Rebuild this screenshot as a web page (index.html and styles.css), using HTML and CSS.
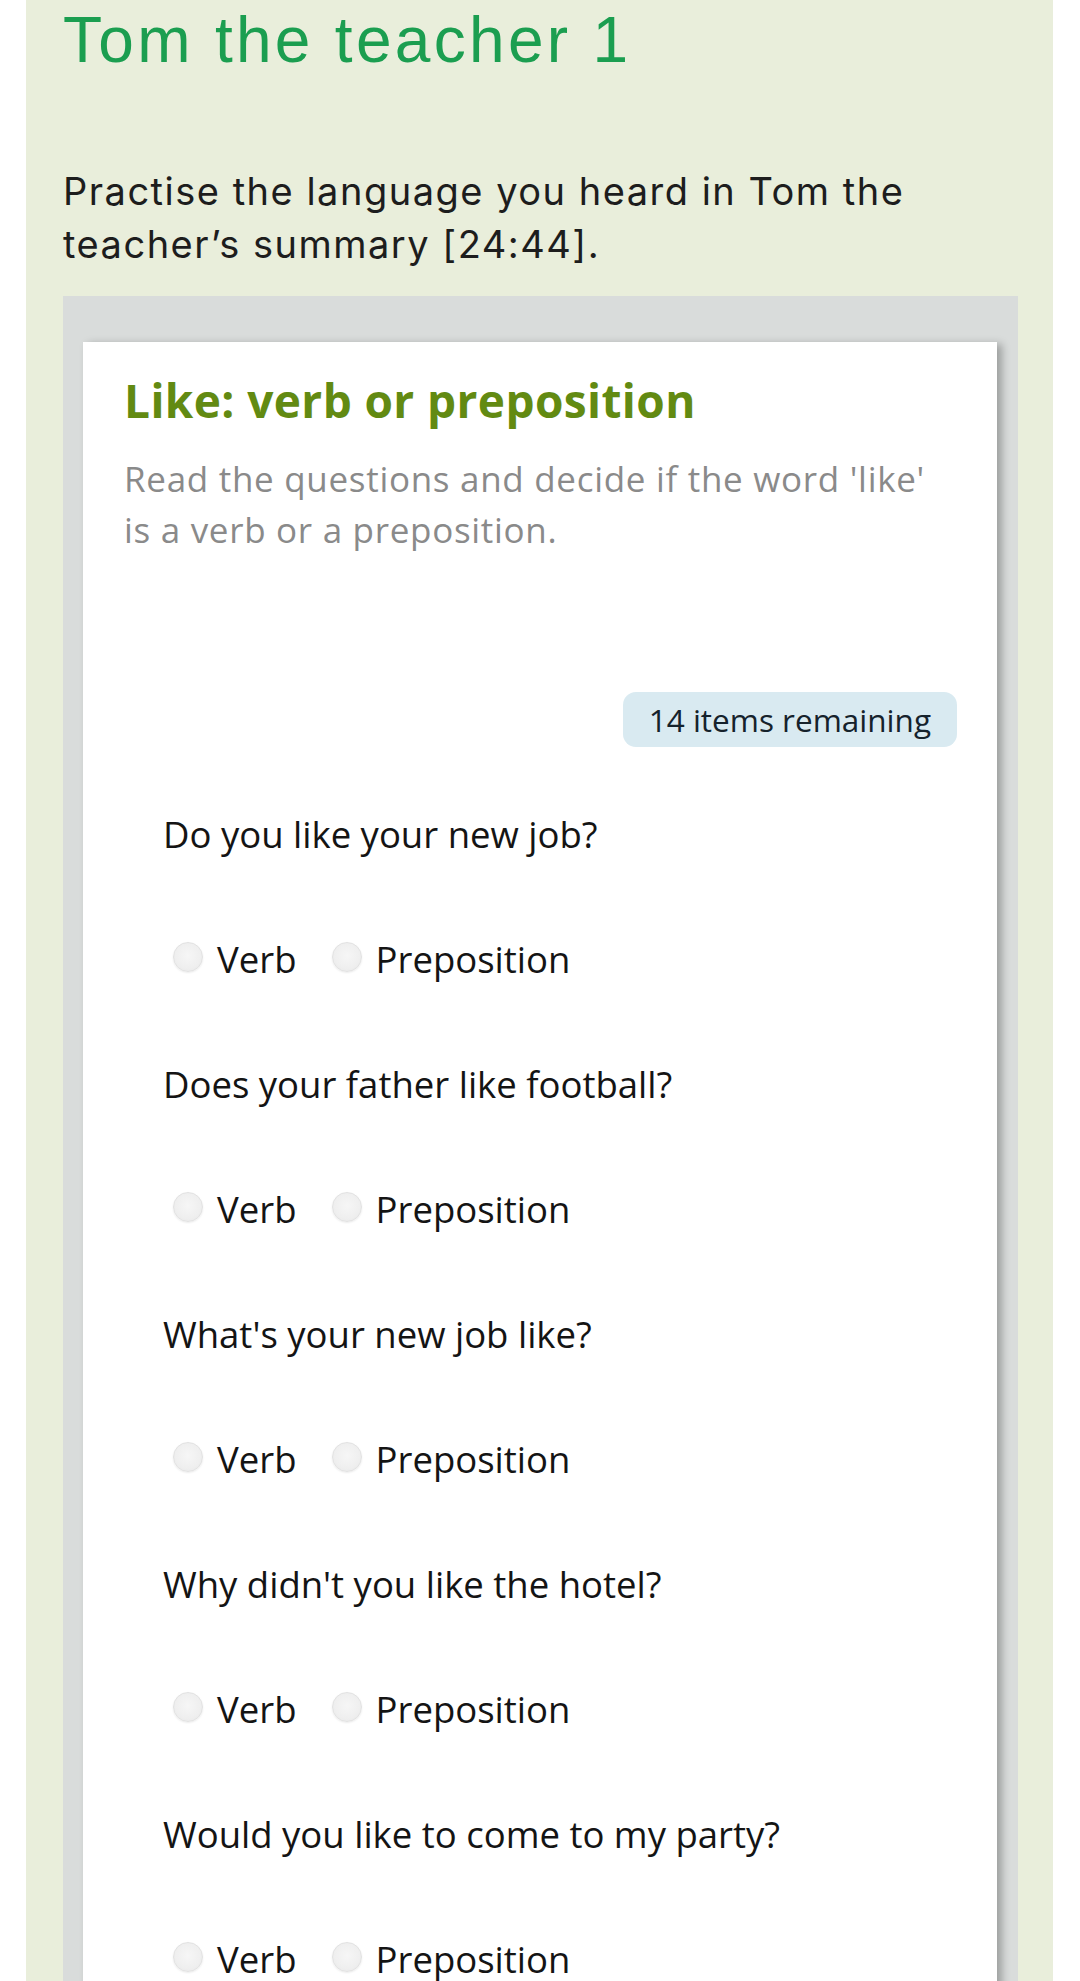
FILE: index.html
```html
<!DOCTYPE html>
<html lang="en">
<head>
<meta charset="utf-8">
<title>Tom the teacher 1</title>
<link rel="stylesheet" href="styles.css">
</head>
<body>
<div class="panel">
  <h1 class="title">Tom the teacher 1</h1>
  <p class="intro">Practise the language you heard in Tom the teacher’s summary [24:44].</p>
  <div class="frame">
    <div class="card">
      <h2 class="card-title">Like: verb or preposition</h2>
      <p class="card-desc">Read the questions and decide if the word 'like' is a verb or a preposition.</p>
      <div class="badge-row"><span class="badge">14 items remaining</span></div>
      <div class="items">
        <div class="item">
          <p class="question">Do you like your new job?</p>
          <div class="options">
            <label class="option"><input type="radio" name="q1" class="radio"><span>Verb</span></label>
            <label class="option"><input type="radio" name="q1" class="radio"><span>Preposition</span></label>
          </div>
        </div>
        <div class="item">
          <p class="question">Does your father like football?</p>
          <div class="options">
            <label class="option"><input type="radio" name="q2" class="radio"><span>Verb</span></label>
            <label class="option"><input type="radio" name="q2" class="radio"><span>Preposition</span></label>
          </div>
        </div>
        <div class="item">
          <p class="question">What's your new job like?</p>
          <div class="options">
            <label class="option"><input type="radio" name="q3" class="radio"><span>Verb</span></label>
            <label class="option"><input type="radio" name="q3" class="radio"><span>Preposition</span></label>
          </div>
        </div>
        <div class="item">
          <p class="question">Why didn't you like the hotel?</p>
          <div class="options">
            <label class="option"><input type="radio" name="q4" class="radio"><span>Verb</span></label>
            <label class="option"><input type="radio" name="q4" class="radio"><span>Preposition</span></label>
          </div>
        </div>
        <div class="item">
          <p class="question">Would you like to come to my party?</p>
          <div class="options">
            <label class="option"><input type="radio" name="q5" class="radio"><span>Verb</span></label>
            <label class="option"><input type="radio" name="q5" class="radio"><span>Preposition</span></label>
          </div>
        </div>
      </div>
    </div>
  </div>
</div>
</body>
</html>
```
FILE: styles.css
```css
html, body {
  margin: 0;
  padding: 0;
  background: #ffffff;
}

body {
  height: 1981px;
  overflow: hidden;
}

.panel {
  margin: 0 27px 0 26px;
  padding: 0 35px 0 37px;
  background: #e9eedb;
  min-height: 1981px;
  box-sizing: border-box;
}

.title {
  margin: 0;
  font-family: "Liberation Sans", Arial, sans-serif;
  font-weight: 400;
  font-size: 64px;
  line-height: 80px;
  letter-spacing: 3.3px;
  color: #1b9e50;
}

.intro {
  margin: 85px 0 0 0;
  font-family: Inter, "Liberation Sans", sans-serif;
  font-size: 38px;
  line-height: 53px;
  letter-spacing: 1.5px;
  color: #1d1d1d;
}

.frame {
  margin-top: 25px;
  padding: 46px 21px 0 20px;
  background: #d9dcdb;
  min-height: 1700px;
}

.card {
  background: #ffffff;
  padding: 30px 40px 0 41px;
  box-shadow: 5px 2px 8px rgba(0, 0, 0, 0.28);
  min-height: 1700px;
  font-family: "Open Sans", sans-serif;
}

.card-title {
  margin: 0;
  font-size: 46px;
  font-weight: 700;
  line-height: 56px;
  letter-spacing: 0.4px;
  color: #628a12;
}

.card-desc {
  margin: 25px 0 0 0;
  font-size: 35px;
  line-height: 51px;
  letter-spacing: 0.7px;
  color: #8a8a8a;
}

.badge-row {
  display: flex;
  justify-content: flex-end;
  margin-top: 137px;
}

.badge {
  display: inline-block;
  height: 55px;
  padding: 0 26px;
  border-radius: 13px;
  background: #d9eaf1;
  font-size: 31.5px;
  line-height: 55px;
  color: #15222c;
}

.items {
  margin-top: 62px;
  padding-left: 39px;
}

.item {
  padding-bottom: 75px;
}

.question {
  margin: 0;
  font-size: 36.5px;
  line-height: 50px;
  color: #141414;
}

.options {
  display: flex;
  align-items: center;
  margin-top: 75px;
  padding-left: 10px;
  gap: 35px;
}

.option {
  display: flex;
  align-items: center;
  gap: 14px;
  font-size: 36.5px;
  line-height: 50px;
  color: #141414;
}

.radio {
  appearance: none;
  -webkit-appearance: none;
  margin: 0;
  width: 30px;
  height: 30px;
  border-radius: 50%;
  border: 1px solid #e2e2e2;
  background: radial-gradient(circle at 50% 45%, #f6f6f6 0%, #efefef 60%, #e6e6e6 100%);
  box-shadow: 0 1px 2px rgba(0, 0, 0, 0.08);
  position: relative;
  top: -2px;
}
```
